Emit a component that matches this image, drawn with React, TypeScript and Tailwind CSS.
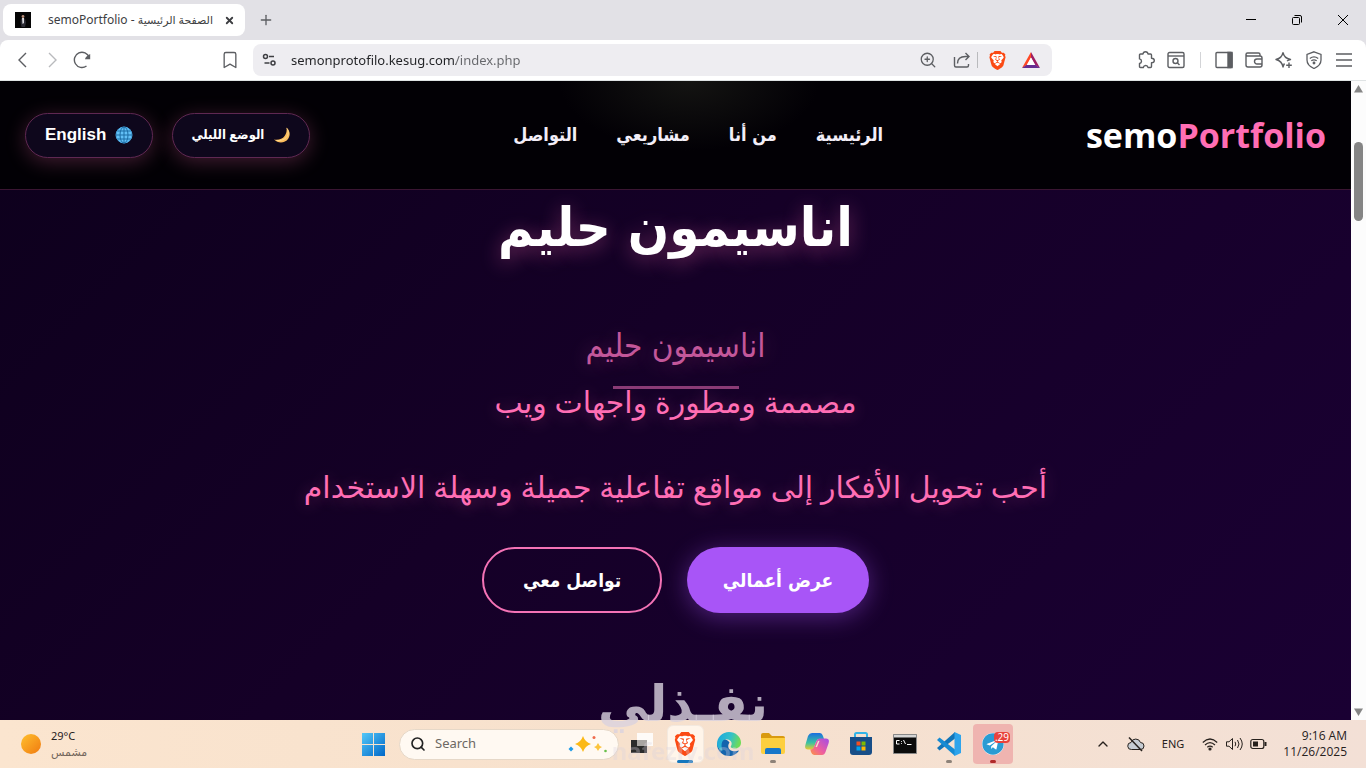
import type { ReactNode } from 'react'
import { ChevronUp, Plus, X, Bookmark, ZoomIn, Search } from 'lucide-react'
import { SiBrave } from 'react-icons/si'
import { FaTelegram } from 'react-icons/fa'

const navLinks = ['الرئيسية', 'من أنا', 'مشاريعي', 'التواصل']

function BraveIcon({ className }: { className: string }) {
  return (
    <span className={`relative flex items-center justify-center ${className}`}>
      <span className="absolute inset-x-[20%] inset-y-[15%] rounded-b-full bg-white" />
      <SiBrave className="relative h-full w-full text-[#fb4a14]" />
    </span>
  )
}

function GlobeIcon() {
  return (
    <svg viewBox="0 0 18 18" className="h-[18px] w-[18px]" fill="none" stroke="#1c6da4">
      <circle cx="9" cy="9" r="8" fill="#62c0f6" stroke="#4aa6e0" />
      <ellipse cx="9" cy="9" rx="4" ry="8" />
      <path d="M9 1v16M1 9h16M2.4 5h13.2M2.4 13h13.2" />
    </svg>
  )
}

function MoonIcon() {
  return (
    <svg viewBox="0 0 18 18" className="h-[18px] w-[18px]">
      <path d="M13.500 1.500c3.4 3 4.3 7.600 1.700 11.200C12 17.200 5.500 18 1 13.600c4.500.7 8.500-.6 10.600-3.600 1.900-2.600 2.400-5.300 1.900-8.500z" fill="#fbbc5c" />
      <path d="M14 2.500c2 3 1.500 6.500-.8 9-2.400 2.500-6 3.500-9.700 3" fill="none" stroke="#ffd98c" />
    </svg>
  )
}

function ToolButton({ label, children }: { label: string; children: ReactNode }) {
  return (
    <button aria-label={label} className="flex h-[30px] w-[30px] items-center justify-center text-[#5c5e62]">
      {children}
    </button>
  )
}

function TabStrip() {
  return (
    <div className="flex h-10 items-center bg-[#e2e1e6] pl-[3px]">
      <div className="flex h-8 w-[242px] items-center rounded-lg bg-white pl-3 pr-[10px]">
        <svg viewBox="0 0 16 16" className="h-4 w-4 shrink-0">
          <path d="M0 0h16v16H0z" fill="#050505" />
          <circle cx="8" cy="4.500" r="1.400" fill="#b98d78" />
          <path d="M6 6.500h4l1 4-1 4.500H6.500L5.500 10z" fill="#2b2b33" />
          <path d="M7 6h2v5l-1.500 1z" fill="#d8d8dc" />
        </svg>
        <span dir="rtl" className="flex-1 whitespace-nowrap pr-[10px] text-right text-[12px] leading-4 text-[#3d3e42]">
          <span className="text-[11px]">الصفحة الرئيسية</span> - semoPortfolio
        </span>
        <button aria-label="Close tab" className="flex h-3 w-3 items-center justify-center">
          <X className="h-[11px] w-[11px] text-[#3d3e42]" strokeWidth={4} />
        </button>
      </div>
      <button aria-label="New tab" className="ml-3 flex h-[18px] w-[18px] items-center justify-center">
        <Plus className="h-4 w-4 text-[#5c5e62]" strokeWidth={2} />
      </button>
      <div className="ml-auto flex">
        <button aria-label="Minimize" className="flex h-10 w-[46px] items-center justify-center">
          <svg viewBox="0 0 10 10" className="h-[10px] w-[10px]"><path d="M0 4.500h10" stroke="#000" /></svg>
        </button>
        <button aria-label="Restore" className="flex h-10 w-[46px] items-center justify-center">
          <svg viewBox="0 0 10 10" className="h-[10px] w-[10px]" fill="none" stroke="#000">
            <rect x=".5" y="2.500" width="7" height="7" rx="1" />
            <path d="M2.500.5H8A1.500 1.500 0 0 1 9.500 2v5.500" />
          </svg>
        </button>
        <button aria-label="Close" className="flex h-10 w-[46px] items-center justify-center">
          <svg viewBox="0 0 10 10" className="h-[10px] w-[10px]"><path d="m0 0 10 10M10 0 0 10" stroke="#000" /></svg>
        </button>
      </div>
    </div>
  )
}

function Toolbar() {
  return (
    <div className="bg-[#e2e1e6]">
      <div className="flex h-[41px] items-center rounded-t-lg border-b border-[#dfe3e4] bg-white px-[7px]">
        <ToolButton label="Back">
          <svg viewBox="0 0 9 16" className="h-4 w-[9px]"><path d="M8 1 1 8l7 7" fill="none" stroke="currentColor" strokeWidth="1.400" /></svg>
        </ToolButton>
        <ToolButton label="Forward">
          <svg viewBox="0 0 9 16" className="h-4 w-[9px] text-[#b9babd]"><path d="m1 1 7 7-7 7" fill="none" stroke="currentColor" strokeWidth="1.400" /></svg>
        </ToolButton>
        <ToolButton label="Reload">
          <svg viewBox="0 0 18 18" className="h-[18px] w-[18px]" fill="none" stroke="currentColor" strokeWidth="1.400">
            <path d="M13.500 15A7.600 7.600 0 1 1 16.200 6.500" />
            <path d="M17.200 3v5.200H12q.5-3 5.200-5.200z" fill="currentColor" stroke="none" />
          </svg>
        </ToolButton>
        <div className="ml-[118px]">
          <ToolButton label="Bookmark"><Bookmark className="h-5 w-5" strokeWidth={1.6} /></ToolButton>
        </div>
        <div className="ml-2 mr-[79px] flex h-8 flex-1 items-center rounded-lg bg-[#eeedf1] pr-[6px]">
          <button aria-label="Site settings" className="ml-[9px] mr-[14px]">
            <svg viewBox="0 0 15 14" className="h-[14px] w-[15px]" fill="none" stroke="#3d3e42" strokeWidth="1.500">
              <circle cx="3.500" cy="3.500" r="2" /><path d="M7 3.500h5" />
              <circle cx="11" cy="10" r="2" /><path d="M2.500 10h5" />
            </svg>
          </button>
          <input
            aria-label="Address"
            defaultValue="semonprotofilo.kesug.com/index.php"
            className="min-w-0 flex-1 bg-[linear-gradient(90deg,#222326_165px,#66676b_165px)] bg-clip-text text-[13px] leading-5 text-transparent outline-none"
          />
          <ToolButton label="Zoom"><ZoomIn className="h-[18px] w-[18px]" strokeWidth={1.7} /></ToolButton>
          <ToolButton label="Share">
            <svg viewBox="0 0 18 18" className="ml-2 h-[18px] w-[18px]" fill="none" stroke="currentColor" strokeWidth="1.400">
              <path d="M1.500 6v8.500q0 1.500 1.500 1.500h11q1.500 0 1.500-1.500V13M4.500 12.500c0-5 3-7 8-7h3M12.500 2l3.500 3.500-3.500 3.500" />
            </svg>
          </ToolButton>
          <span className="ml-1 h-4 w-px bg-[#b9babd]" />
          <span className="ml-1"><ToolButton label="Brave Shields"><BraveIcon className="h-[19px] w-[19px]" /></ToolButton></span>
          <span className="ml-1"><ToolButton label="Brave Rewards">
            <svg viewBox="0 0 18 16" className="h-4 w-[18px]">
              <path d="M9 0 0 16l5-3 4-7.500z" fill="#ff4724" />
              <path d="m9 0 9 16-5-3-4-7.500z" fill="#9e1f63" />
              <path d="M0 16h18l-5-3.500H5z" fill="#662d91" />
              <path d="m9 5.500 4.300 7.500H4.700z" fill="#fff" />
            </svg>
          </ToolButton></span>
        </div>
        <ToolButton label="Extensions">
          <svg viewBox="0 0 18 18" className="h-[18px] w-[18px]" fill="none" stroke="currentColor" strokeWidth="1.400" strokeLinejoin="round">
            <path d="M3.500 3H6q.2-2.300 2.500-2.300T11 3h2.500q1 0 1 1v3.200q2.800 0 2.800 2.300t-2.800 2.300V15.500q0 1-1 1H11q-.3-2-2.300-2t-2.400 2H3.500q-1 0-1-1v-3q2-.4 2-2.300t-2-2.300V4q0-1 1-1z" />
          </svg>
        </ToolButton>
        <ToolButton label="Find in page">
          <svg viewBox="0 0 18 18" className="h-[18px] w-[18px]" fill="none" stroke="currentColor" strokeWidth="1.400">
            <rect x="1" y="1.500" width="16" height="15" rx="1.500" /><path d="M1 5h16" />
            <circle cx="8.500" cy="10" r="2.500" /><path d="m10.500 12 2 2" />
          </svg>
        </ToolButton>
        <span className="ml-[9px] mr-2 h-4 w-px bg-[#d3d4d7]" />
        <ToolButton label="Sidebar">
          <svg viewBox="0 0 18 18" className="h-[18px] w-[18px]" fill="none" stroke="currentColor" strokeWidth="1.400">
            <rect x="1" y="1.500" width="16" height="15" rx="1" /><path d="M13 1.500h4v15h-4z" fill="currentColor" />
          </svg>
        </ToolButton>
        <ToolButton label="Wallet">
          <svg viewBox="0 0 18 18" className="h-[18px] w-[18px]" fill="none" stroke="currentColor" strokeWidth="1.400">
            <path d="M15 5V3.500Q15 2 13.500 2h-11A1.500 1.500 0 0 0 1 3.500v10.500Q1 16 3 16h12q2 0 2-2V7q0-2-2-2H2.500Q1 5 1 3.500" />
            <path d="M17 8h-5a2.500 2.500 0 0 0 0 5h5" />
          </svg>
        </ToolButton>
        <ToolButton label="Leo AI">
          <svg viewBox="0 0 18 18" className="h-[18px] w-[18px]" fill="none" stroke="currentColor" strokeWidth="1.400" strokeLinejoin="round">
            <path d="M8 1.500q1 5.500 7.500 7-2 .5-3.500 1.500M8 1.500Q7 7 1 8.500 7 10 8 16q.5-2 1.500-3.500M14 11.500v5.500M11.200 14.300h5.600" />
          </svg>
        </ToolButton>
        <ToolButton label="VPN">
          <svg viewBox="0 0 18 18" className="h-[18px] w-[18px]" fill="none" stroke="currentColor" strokeWidth="1.300">
            <path d="M9 .8 16 3.500v5.500q0 5.500-7 8.500-7-3-7-8.500V3.500zM4.800 7.500q4.200-3.300 8.400 0M6.300 9.800q2.700-2 5.400 0" />
            <circle cx="9" cy="12" r=".8" fill="currentColor" />
          </svg>
        </ToolButton>
        <ToolButton label="Menu">
          <svg viewBox="0 0 16 14" className="h-[14px] w-4"><path d="M0 1h16M0 7h16M0 13h16" stroke="currentColor" strokeWidth="1.500" /></svg>
        </ToolButton>
      </div>
    </div>
  )
}

function SiteHeader() {
  return (
    <header className="flex h-[109px] shrink-0 items-center justify-between border-b border-[#3a1533] bg-[#020005] bg-[radial-gradient(ellipse_130px_70px_at_51%_0%,#141412,#020005)] px-[25px]">
      <a href="#home" dir="ltr" className="font-['Open_Sans'] text-[34px] font-bold leading-[48px] text-white">
        semo<span className="text-[#ff6eb4]">Portfolio</span>
      </a>
      <nav className="flex gap-[39px]">
        {navLinks.map((link) => (
          <a key={link} href="#" className="font-['DejaVu_Sans_Condensed','DejaVu_Sans',sans-serif] text-[18px] font-bold leading-7 text-[#f3eef8]">{link}</a>
        ))}
      </nav>
      <div className="flex gap-[19px]">
        <button className="flex h-[45px] items-center gap-[9px] rounded-full border border-[#5f2852] bg-[#0e071c] px-[18px] font-['Noto_Sans','DejaVu_Sans_Condensed',sans-serif] text-[13px] font-bold text-white shadow-[0_4px_20px_rgba(255,110,180,0.25)]">
          <MoonIcon />
          الوضع الليلي
        </button>
        <button className="flex h-[45px] items-center gap-[9px] rounded-full border border-[#5f2852] bg-[#0e071c] px-[19px] font-['Liberation_Sans'] text-[17px] font-bold text-white shadow-[0_4px_20px_rgba(255,110,180,0.25)]">
          <GlobeIcon />
          English
        </button>
      </div>
    </header>
  )
}

function Hero() {
  return (
    <main className="flex flex-1 flex-col items-center text-center font-['DejaVu_Sans_Condensed','DejaVu_Sans',sans-serif]">
      <h1 className="whitespace-nowrap text-[54px] font-bold leading-[76px] text-white [text-shadow:0_4px_20px_rgba(255,110,180,0.4)]">
        اناسيمون حليم
      </h1>
      <h2 className="mt-[54px] text-[33px] leading-[52px] text-[#c3579a] [text-shadow:0_2px_20px_rgba(255,110,180,0.3)]">
        اناسيمون حليم
      </h2>
      <div className="mt-[14px] h-[3px] w-[126px] bg-[#8a3b76]" />
      <p className="whitespace-nowrap font-['Noto_Sans','DejaVu_Sans',sans-serif] text-[30px] leading-[26px] text-[#ff6eb4] [text-shadow:0_2px_16px_rgba(255,110,180,0.3)]">
        مصممة ومطورة واجهات ويب
      </p>
      <p className="mt-12 whitespace-nowrap font-['Noto_Sans','DejaVu_Sans',sans-serif] text-[30px] leading-[48px] text-[#ff6eb4] [text-shadow:0_2px_16px_rgba(255,110,180,0.3)]">
        أحب تحويل الأفكار إلى مواقع تفاعلية جميلة وسهلة الاستخدام
      </p>
      <div className="mt-9 flex gap-[25px]">
        <a href="#projects" className="flex h-[66px] w-[182px] items-center justify-center rounded-full bg-[#a855f7] text-[19px] font-bold text-white shadow-[0_4px_24px_rgba(168,85,247,0.4)]">
          عرض أعمالي
        </a>
        <a href="#contact" className="flex h-[66px] w-[180px] items-center justify-center rounded-full border-2 border-[#f472b6] text-[19px] font-bold text-white">
          تواصل معي
        </a>
      </div>
    </main>
  )
}

function PageScrollbar() {
  return (
    <div className="flex w-[15px] shrink-0 flex-col items-center bg-[#fcfcfc] py-1">
      <svg viewBox="0 0 9 8" className="h-2 w-[9px]"><path d="M4.500 0 9 7.500H0z" fill="#858585" /></svg>
      <div className="mt-[49px] h-[79px] w-[9px] rounded-full bg-[#858585]" />
      <svg viewBox="0 0 9 8" className="mt-auto h-2 w-[9px]"><path d="M4.500 8 9 .5H0z" fill="#858585" /></svg>
    </div>
  )
}

function TaskItem({ label, mark, children }: { label: string; mark?: string; children: ReactNode }) {
  return (
    <button aria-label={label} className="relative flex h-12 w-11 items-center justify-center">
      {children}
      {mark && <span className={`absolute bottom-[5px] h-[3px] rounded-full ${mark}`} />}
    </button>
  )
}

function Taskbar() {
  return (
    <footer className="grid h-12 shrink-0 grid-cols-[1fr_auto_1fr] items-center bg-[linear-gradient(90deg,#fbe5cf,#f7e1cd_45%,#f3e0d6)] text-[#27211d]">
      <div className="flex items-center gap-[10px] pl-[21px]">
        <svg viewBox="0 0 20 20" className="h-5 w-5">
          <defs>
            <linearGradient id="sun" x1="0" y1="0" x2="1" y2="1"><stop stopColor="#ffc02e" /><stop offset="1" stopColor="#f07a10" /></linearGradient>
          </defs>
          <circle cx="10" cy="10" r="10" fill="url(#sun)" />
        </svg>
        <div className="text-[11px] leading-4">
          <p>29°C</p>
          <p className="text-[#73665c]">مشمس</p>
        </div>
      </div>

      <div className="flex items-center">
        <TaskItem label="Start">
          <svg viewBox="0 0 23 23" className="h-[23px] w-[23px]">
            <defs>
              <linearGradient id="win" x1="0" y1="0" x2="1" y2="1"><stop stopColor="#54c8f8" /><stop offset="1" stopColor="#0067c8" /></linearGradient>
            </defs>
            <path d="M0 0h11v11H0zM12 0h11v11H12zM0 12h11v11H0zM12 12h11v11H12z" fill="url(#win)" />
          </svg>
        </TaskItem>
        <label className="ml-1 flex h-[31px] w-[220px] items-center rounded-full border border-[#e6d8c8] bg-[#fff9f2] pl-[10px]">
          <Search className="h-4 w-4 text-[#222]" strokeWidth={2.5} />
          <input placeholder="Search" aria-label="Search" className="ml-[9px] w-[110px] text-[13px] outline-none placeholder:text-[#6d6863]" />
          <svg viewBox="0 0 40 18" className="ml-auto mr-[10px] h-[18px] w-10">
            <path d="M15 1q2 6 8 8-6 2-8 8-2-6-8-8 6-2 8-8z" fill="#fbb917" />
            <path d="M30 8q1 3 4 4-3 1-4 4-1-3-4-4 3-1 4-4z" fill="#fcc43c" />
            <path d="M3 11.500 5.500 14 3 16.500.5 14z" fill="#1d9be8" />
            <circle cx="26" cy="2.500" r="1.500" fill="#ef6a4c" /><circle cx="37.500" cy="16" r="1.300" fill="#68c04a" />
          </svg>
        </label>
        <TaskItem label="Task view">
          <svg viewBox="0 0 24 24" className="h-6 w-6">
            <path d="M2 8h16v13H2z" fill="#2b2b2b" /><path d="M8 1h16v13H8z" fill="#fff" fillOpacity=".85" />
            <path d="M8 8h10v6H8z" fill="#a9a5a2" />
          </svg>
        </TaskItem>
        <TaskItem label="Brave" mark="w-4 bg-[#1577bd]">
          <span className="flex h-[38px] w-[37px] items-center justify-center rounded-md border border-[#f3e9df] bg-[#fff5ea]">
            <BraveIcon className="h-6 w-6" />
          </span>
        </TaskItem>
        <TaskItem label="Edge">
          <svg viewBox="0 0 24 24" className="h-6 w-6">
            <defs>
              <linearGradient id="edge" x1="0" y1="0" x2="1" y2=".3"><stop stopColor="#19a5e0" /><stop offset=".6" stopColor="#35c1c8" /><stop offset="1" stopColor="#6edb57" /></linearGradient>
            </defs>
            <path d="M0 12a12 12 0 0 0 12 12c4 0 8-2 10-5.500-9 3-13-3-9.500-8C9 5 2 6 0 12z" fill="#1464ad" />
            <path d="M0 12C0 5 5.500 0 12 0s12 5 12 10.500c0 4-3 6-6 6s-5-1-4-2.500C16.500 10 12 6.500 8 7.500 4 8.500 4 14 5.500 19 2 17.500 0 15 0 12z" fill="url(#edge)" />
          </svg>
        </TaskItem>
        <TaskItem label="File Explorer" mark="w-[6px] bg-[#8d8279]">
          <svg viewBox="0 0 24 22" className="h-[22px] w-6">
            <path d="M0 2q0-2 2-2h6l3 3h11q2 0 2 2v4H0z" fill="#d99a10" />
            <path d="M0 5h24v14q0 2-2 2H2q-2 0-2-2z" fill="#fdcf3f" />
            <path d="M4 21v-4q0-2 2-2h12q2 0 2 2v4z" fill="#1877c9" />
          </svg>
        </TaskItem>
        <TaskItem label="Copilot">
          <svg viewBox="0 0 24 22" className="h-[22px] w-6">
            <defs>
              <linearGradient id="copA" x1="0" y1="0" x2="0" y2="1"><stop stopColor="#1c6ee0" /><stop offset=".6" stopColor="#3cc3a0" /><stop offset="1" stopColor="#ecc92e" /></linearGradient>
              <linearGradient id="copB" x1="1" y1="0" x2="0" y2="1"><stop stopColor="#a24ce8" /><stop offset=".6" stopColor="#f0609b" /><stop offset="1" stopColor="#fb9740" /></linearGradient>
            </defs>
            <path d="M7 0h8q2 0 3 3l1 3h-5q-2 0-3 3l-2 5.500q-1 2-3 2H3q-4 0-2.500-5l2.500-8.500Q4.500 0 7 0z" fill="url(#copA)" />
            <path d="M17 22H9q-2 0-3-3l-.7-2.500Q8 16.500 9 14l2-5q1-3 3-3.500h7q4 0 2.500 5l-3 8.500q-1 3-3.500 3z" fill="url(#copB)" />
            <path d="m10.500 14 2.500-6q1-.5 1.500 0l-2.500 6z" fill="#f7e1cd" />
          </svg>
        </TaskItem>
        <TaskItem label="Microsoft Store">
          <svg viewBox="0 0 24 24" className="h-6 w-6">
            <path d="M6 5V2.500Q6 1 7.500 1h9Q18 1 18 2.500V5" fill="none" stroke="#32b4e8" strokeWidth="2" />
            <path d="M1 5h22v15q0 3-3 3H4q-3 0-3-3z" fill="#174e88" />
            <path d="M7.500 9.500h4v4h-4z" fill="#f25022" /><path d="M12.500 9.500h4v4h-4z" fill="#7fba00" />
            <path d="M7.500 14.500h4v4h-4z" fill="#00a4ef" /><path d="M12.500 14.500h4v4h-4z" fill="#ffb900" />
          </svg>
        </TaskItem>
        <TaskItem label="Command Prompt">
          <svg viewBox="0 0 24 20" className="h-5 w-6">
            <path d="M.5.500h23v19H.5z" fill="#0b0b0b" stroke="#888" /><path d="M1 1h22v2.500H1z" fill="#d5d5d5" />
            <path d="M6.500 6.500h-3v3.500h3M8.500 7v.8M8.500 9v.8M10.500 6l2 4M14 10.500h4.500" fill="none" stroke="#fff" />
          </svg>
        </TaskItem>
        <TaskItem label="Visual Studio Code" mark="w-[6px] bg-[#8d8279]">
          <svg viewBox="0 0 24 24" className="h-6 w-6">
            <path d="m0 16 2.500 2.500L18 6.500V0z" fill="#1275b8" />
            <path d="m0 8 2.500-2.500L18 17.500V24z" fill="#168bd3" />
            <path d="m17.500 0 6.500 3v18l-6.500 3z" fill="#2ea4ec" />
          </svg>
        </TaskItem>
        <TaskItem label="Telegram" mark="w-[6px] bg-[#b02a2a]">
          <span className="flex h-10 w-10 items-center justify-center rounded bg-[#efb4b0]">
            <span className="flex rounded-full bg-white">
              <FaTelegram className="h-[22px] w-[22px] text-[#2a9bd3]" />
            </span>
          </span>
          <span className="absolute right-[5px] top-3 rounded-sm bg-[#e8423c] px-px text-[10px] leading-[11px] text-white">.29</span>
        </TaskItem>
      </div>

      <div className="flex items-center justify-end pr-[19px]">
        <button aria-label="Show hidden icons"><ChevronUp className="h-4 w-4" strokeWidth={2} /></button>
        <svg viewBox="0 0 18 16" className="ml-4 h-4 w-[18px]" fill="none" stroke="#27211d">
          <path d="M4.500 13.500a3.500 3.500 0 0 1-.5-7 5 5 0 0 1 9.500 0 3.500 3.500 0 0 1 0 7z" fill="#c6ccd3" />
          <path d="m2 1.500 13 13.500" strokeWidth="1.500" />
        </svg>
        <span className="ml-[17px] text-[11px] leading-4">ENG</span>
        <svg viewBox="0 0 16 14" className="ml-[18px] h-[14px] w-4" fill="none" stroke="#27211d" strokeWidth="1.200">
          <path d="M.8 5.500q7.200-7 14.400 0M3 8q5-4.800 10 0M5.300 10.300q2.700-2.500 5.400 0" /><circle cx="8" cy="12" r="1" fill="#27211d" />
        </svg>
        <svg viewBox="0 0 17 14" className="ml-2 h-[14px] w-[17px]" fill="none" stroke="#27211d">
          <path d="M.5 4.800h2.500L6.500 1.500v11L3 9.200H.5zM9 4.800q1.500 2.200 0 4.400M11.500 3q3 4 0 8M14 1q4.500 6 0 12" />
        </svg>
        <svg viewBox="0 0 17 12" className="ml-[7px] h-3 w-[17px]" fill="none" stroke="#27211d" strokeWidth="1.200">
          <rect x=".8" y="1.500" width="13" height="9" rx="2" /><path d="M3 3.500h5v5H3z" fill="#27211d" stroke="none" /><path d="M15.500 4v4" strokeWidth="2" />
        </svg>
        <div className="ml-4 text-right font-['Open_Sans'] text-[12px] leading-4">
          <p>9:16 AM</p>
          <p>11/26/2025</p>
        </div>
      </div>
    </footer>
  )
}

export default function App() {
  return (
    <div className="relative flex h-screen flex-col overflow-hidden font-['Noto_Sans','DejaVu_Sans',sans-serif]">
      <TabStrip />
      <Toolbar />
      <div className="flex min-h-0 flex-1">
        <div dir="rtl" className="flex min-w-0 flex-1 flex-col overflow-hidden bg-[linear-gradient(135deg,#0d001c,#150027_45%,#1a0033)]">
          <SiteHeader />
          <Hero />
        </div>
        <PageScrollbar />
      </div>
      <Taskbar />
      <div className="pointer-events-none absolute inset-x-0 bottom-0 flex flex-col items-center text-[#d9d2de]/80">
        <p dir="rtl" className="font-['DejaVu_Sans'] text-[50px] font-bold leading-[60px]">نفـذلي</p>
        <p className="text-[24px] font-bold leading-[34px] opacity-40">nafezly.com</p>
      </div>
    </div>
  )
}
